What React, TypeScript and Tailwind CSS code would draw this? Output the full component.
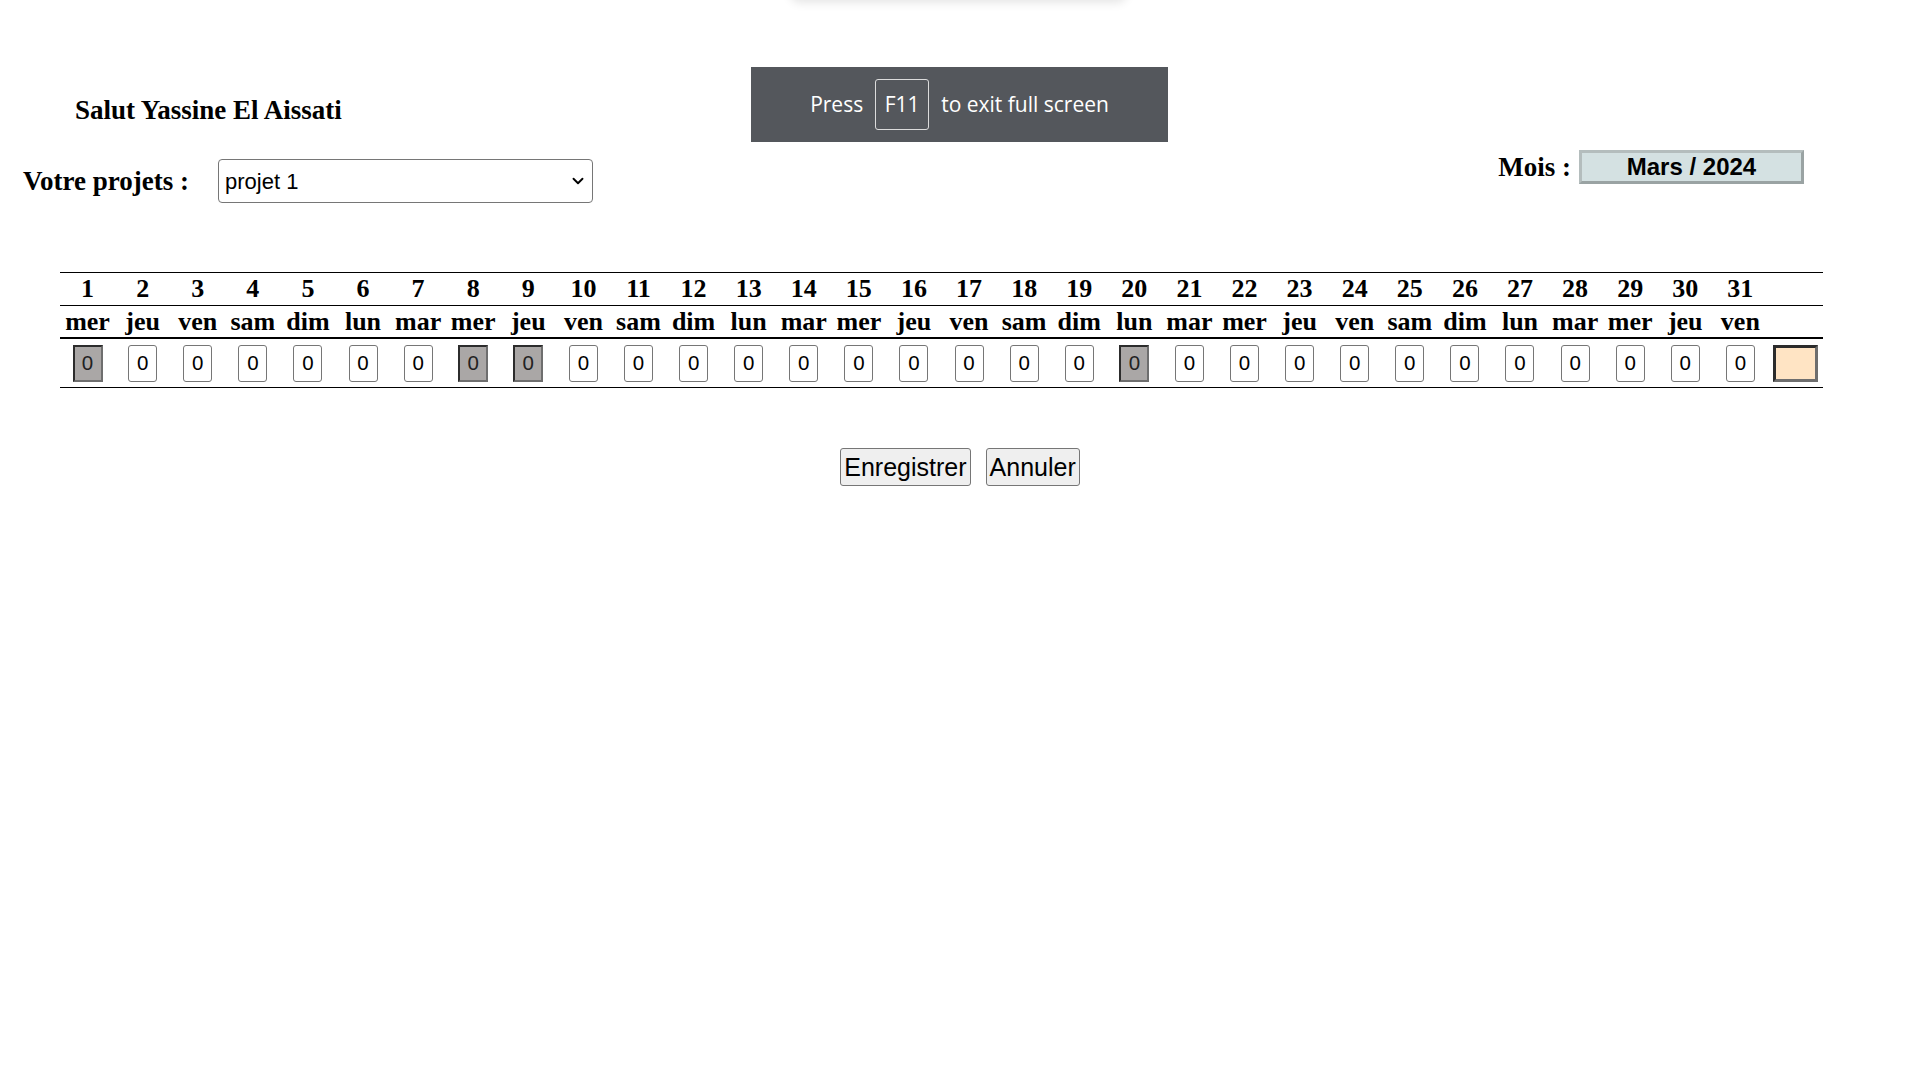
import { ChevronDown } from "lucide-react";

/* ── Data ─────────────────────────────────────── */
const dayNames = ["dim", "lun", "mar", "mer", "jeu", "ven", "sam"];
const days = Array.from({ length: 31 }, (_, i) => ({
  n: i + 1,
  name: dayNames[(i + 3) % 7],
}));
const lockedDays = new Set([1, 8, 9, 20]);

/* ── Cells ────────────────────────────────────── */
function DayInput({ locked }: { locked: boolean }) {
  if (locked) {
    return (
      <div className="w-[30px] h-[37px] flex items-center justify-center bg-[#aaa7a6] border-2 border-t-[#2c2c2c] border-l-[#2c2c2c] border-b-[#6e6e6e] border-r-[#6e6e6e] text-[20.5px] text-[#222]">
        0
      </div>
    );
  }
  return (
    <div className="w-[29px] h-[37px] flex items-center justify-center bg-white border border-[#767676] rounded-[3px] text-[20.5px] text-black">
      0
    </div>
  );
}

/* ── Main ─────────────────────────────────────── */
export default function App() {
  return (
    <div className="relative w-full h-[1080px] bg-white overflow-hidden font-['Liberation_Serif',serif] text-black">
      {/* faint browser shadow at the very top */}
      <div className="absolute left-[790px] top-[-30px] w-[337px] h-[30px] rounded-b-[10px] shadow-[0_3px_10px_rgba(0,0,0,0.10)]" />

      {/* full screen notice */}
      <div className="absolute left-[751px] top-[67px] w-[417px] h-[75px] bg-[#54575c] flex items-center justify-center gap-[12px] text-white text-[21px] font-['Open_Sans',sans-serif]">
        <span>Press</span>
        <span className="w-[54px] h-[51px] flex items-center justify-center border border-[#dcdcdc] rounded-[3px]">F11</span>
        <span>to exit full screen</span>
      </div>

      <div className="pl-[75px] pt-[96px] text-[27px] leading-[28px] font-bold">Salut Yassine El Aissati</div>

      <div className="mt-[23px] flex items-start justify-between pr-[116px]">
        <div className="mt-[12px] flex items-center pl-[23px]">
          <span className="w-[195px] text-[27px] font-bold">Votre projets :</span>
          <div className="w-[375px] h-[44px] flex items-center justify-between pl-[6px] pr-[5px] border border-[#767676] rounded-[4px] font-['Liberation_Sans',Arial,sans-serif] text-[22px]">
            <span>projet 1</span>
            <ChevronDown size={18} strokeWidth={2.5} />
          </div>
        </div>
        <div className="flex items-center gap-[8px]">
          <span className="text-[27px] font-bold">Mois :</span>
          <div className="w-[225px] h-[34px] flex items-center justify-center bg-[#d4e1e2] border-[3px] border-t-[#b4bdbd] border-l-[#b4bdbd] border-b-[#9aa3a3] border-r-[#9aa3a3] font-['Liberation_Sans',Arial,sans-serif] font-bold text-[24px]">
            Mars / 2024
          </div>
        </div>
      </div>

      {/* feuille de temps */}
      <div className="mt-[69px] ml-[60px] w-[1763px] border-t border-b border-black">
        <div className="grid grid-cols-[repeat(32,minmax(0,1fr))] h-[32px] items-center text-[26px] font-bold">
          {days.map((d) => (
            <div key={d.n} className="text-center leading-[30px]">{d.n}</div>
          ))}
          <div />
        </div>
        <div className="grid grid-cols-[repeat(32,minmax(0,1fr))] h-[32px] items-center border-t border-black text-[26px] font-bold">
          {days.map((d) => (
            <div key={d.n} className="text-center leading-[28px]">{d.name}</div>
          ))}
          <div />
        </div>
        <div className="grid grid-cols-[repeat(32,minmax(0,1fr))] h-[50px] items-center border-t-2 border-black font-['Liberation_Sans',Arial,sans-serif]">
          {days.map((d) => (
            <div key={d.n} className="flex justify-center">
              <DayInput locked={lockedDays.has(d.n)} />
            </div>
          ))}
          <div className="flex justify-center">
            <div className="w-[45px] h-[37px] bg-[#ffe4c4] border-[3px] border-t-[#2c2c2c] border-l-[#2c2c2c] border-b-[#6e6e6e] border-r-[#6e6e6e]" />
          </div>
        </div>
      </div>

      <div className="mt-[60px] flex justify-center gap-[15px] font-['Liberation_Sans',Arial,sans-serif] text-[25px]">
        <button className="h-[38px] px-[3px] bg-[#efefef] border border-[#767676] rounded-[3px] leading-none">Enregistrer</button>
        <button className="h-[38px] px-[3px] bg-[#efefef] border border-[#767676] rounded-[3px] leading-none">Annuler</button>
      </div>
    </div>
  );
}
